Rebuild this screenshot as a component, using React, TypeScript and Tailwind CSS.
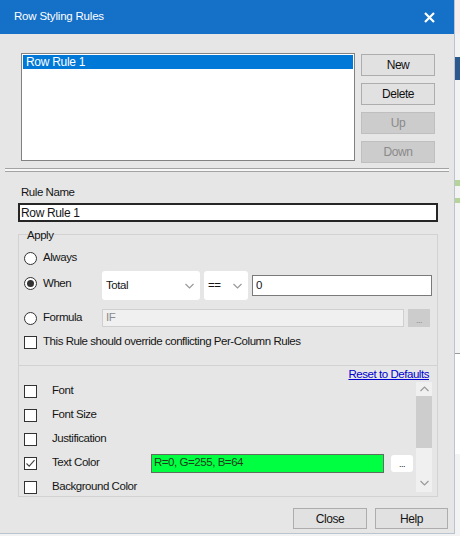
import { ReactNode } from 'react';

function Radio({ checked }: { checked?: boolean }) {
  return (
    <span className="flex h-[13px] w-[13px] shrink-0 items-center justify-center rounded-full border border-[#333] bg-white">
      {checked && <span className="h-[7px] w-[7px] rounded-full bg-[#333]" />}
    </span>
  );
}

function Check({ checked }: { checked?: boolean }) {
  return (
    <span className="flex h-[13px] w-[13px] shrink-0 items-center justify-center border border-[#333] bg-white">
      {checked && (
        <svg width="11" height="11" viewBox="0 0 11 11">
          <polyline points="1.5,5.5 4.2,8.2 9.5,2.2" fill="none" stroke="#444" strokeWidth="1.1" />
        </svg>
      )}
    </span>
  );
}

function Chevron({ up }: { up?: boolean }) {
  return (
    <svg width="9" height="6" viewBox="0 0 9 6">
      <polyline
        points={up ? '0.5,5 4.5,1 8.5,5' : '0.5,1 4.5,5 8.5,1'}
        fill="none"
        stroke="#9a9a9a"
        strokeWidth="1.2"
      />
    </svg>
  );
}

function Combo({ label, className }: { label: string; className: string }) {
  return (
    <div className={`flex h-[29px] items-center justify-between rounded-[3px] bg-white pl-[4px] pr-[6px] ${className}`}>
      <span>{label}</span>
      <Chevron />
    </div>
  );
}

function SideButton({ children, disabled }: { children: ReactNode; disabled?: boolean }) {
  return (
    <div
      className={`flex h-[22px] w-[74px] items-center justify-center border text-[12px] ${
        disabled ? 'border-[#bfbfbf] bg-[#cccccc] text-[#8a8a8a]' : 'border-[#adadad] bg-[#e1e1e1] text-[#111]'
      }`}
    >
      {children}
    </div>
  );
}

const items = ['Font', 'Font Size', 'Justification', 'Text Color', 'Background Color'];

export default function App() {
  return (
    <div className="flex h-[536px] w-[460px] bg-[#f3f3f3] font-['Liberation_Sans',Arial,sans-serif] text-[11.5px] tracking-[-0.45px] text-[#151515]">
      <div className="flex h-[534px] w-[455px] shrink-0 flex-col border-b border-r border-[#b9c4d0] bg-[#e6e6e6]">
        {/* title bar */}
        <div className="flex h-[34px] shrink-0 items-center justify-between bg-[#1570c8] pl-[14px] pr-[19px] text-white">
          <span className="text-[11.5px] tracking-[-0.2px]">Row Styling Rules</span>
          <svg width="11" height="11" viewBox="0 0 11 11">
            <path d="M1 1 L10 10 M10 1 L1 10" stroke="white" strokeWidth="2.2" />
          </svg>
        </div>

        {/* rules list */}
        <div className="flex pl-[21px] pt-[19px]">
          <div className="h-[108px] w-[334px] border border-[#828282] bg-white p-[1px]">
            <div className="flex h-[14px] items-center bg-[#0078d7] pl-[3px] text-[12px] tracking-[-0.3px] text-white">Row Rule 1</div>
          </div>
          <div className="ml-[6px] flex flex-col gap-[7px] pt-[1px]">
            <SideButton>New</SideButton>
            <SideButton>Delete</SideButton>
            <SideButton disabled>Up</SideButton>
            <SideButton disabled>Down</SideButton>
          </div>
        </div>

        {/* splitter */}
        <div className="mx-[5px] mt-[5px] h-[4px] border-y border-[#a3a3a3] bg-[#f7f7f7]" />

        {/* rule editor */}
        <div className="flex flex-col px-[18px]">
          <div className="mt-[14px] flex h-[14px] items-center pl-[3px]">Rule Name</div>
          <div className="mt-[3px] flex h-[19px] w-[420px] items-center border-2 border-[#262626] bg-white pl-[1px] text-[12px] tracking-[-0.35px]">
            Row Rule 1
          </div>

          <div className="mt-[12px] flex h-[263px] w-[420px] flex-col border border-[#d2d2d2]">
            <div className="-mt-[6px] flex h-[14px] items-center pl-[8px]">Apply</div>

            <div className="mt-[7px] flex h-[16px] items-center gap-[6px] pl-[5px]">
              <Radio />
              <span>Always</span>
            </div>

            <div className="mt-[5px] flex h-[29px] items-center pl-[5px]">
              <div className="-mt-[4px] flex w-[78px] items-center gap-[6px]">
                <Radio checked />
                <span>When</span>
              </div>
              <Combo label="Total" className="w-[98px]" />
              <Combo label="==" className="ml-[4px] w-[44px]" />
              <div className="ml-[4px] flex h-[21px] w-[180px] items-center border border-[#7a7a7a] bg-white pl-[3px]">0</div>
            </div>

            <div className="mt-[9px] flex h-[18px] items-center pl-[5px]">
              <div className="flex w-[78px] items-center gap-[6px]">
                <Radio />
                <span>Formula</span>
              </div>
              <div className="flex h-[18px] w-[302px] items-center border border-[#cfcfcf] bg-[#f0f0f0] pl-[3px] text-[#8c8c8c]">IF</div>
              <div className="ml-[4px] flex h-[18px] w-[22px] items-end justify-center bg-[#cccccc] pb-[2px] text-[9px] leading-none text-[#8c8c8c]">
                ...
              </div>
            </div>

            <div className="mt-[8px] flex h-[14px] items-center gap-[6px] pl-[5px]">
              <Check />
              <span>This Rule should override conflicting Per-Column Rules</span>
            </div>

            {/* style options */}
            <div className="mt-[16px] flex flex-1 flex-col overflow-hidden border-t border-[#d2d2d2]">
              <div className="flex h-[14px] justify-end pr-[8px] text-[#0000d0] underline">Reset to Defaults</div>
              <div className="flex flex-1 overflow-hidden">
                <div className="-mt-px flex flex-1 flex-col">
                  {items.map((label) => (
                    <div key={label} className="flex h-[24px] shrink-0 items-center pl-[5px]">
                      <Check checked={label === 'Text Color'} />
                      <span className={label === 'Text Color' ? 'ml-[15px] w-[99px]' : 'ml-[15px]'}>{label}</span>
                      {label === 'Text Color' && (
                        <>
                          <div className="flex h-[19px] w-[233px] items-center border border-[#5f6f5f] bg-[#00ff40] pl-[2px] text-[#1d3b1d]">
                            R=0, G=255, B=64
                          </div>
                          <div className="ml-[7px] flex h-[17px] w-[22px] items-end justify-center rounded-[3px] bg-white pb-[3px] text-[9px] leading-none">
                            ...
                          </div>
                        </>
                      )}
                    </div>
                  ))}
                </div>
                <div className="mr-[5px] mt-[2px] flex h-[110px] w-[16px] flex-col items-center bg-[#f0f0f0]">
                  <div className="flex h-[14px] items-center">
                    <Chevron up />
                  </div>
                  <div className="h-[52px] w-[16px] bg-[#cdcdcd]" />
                  <div className="flex-1" />
                  <div className="flex h-[18px] items-center">
                    <Chevron />
                  </div>
                </div>
              </div>
            </div>
          </div>
        </div>

        {/* bottom buttons */}
        <div className="mt-[11px] flex justify-end gap-[8px] pr-[6px] text-[12px]">
          <div className="flex h-[21px] w-[74px] items-center justify-center border border-[#adadad] bg-[#e1e1e1]">Close</div>
          <div className="flex h-[21px] w-[73px] items-center justify-center border border-[#adadad] bg-[#e1e1e1]">Help</div>
        </div>
      </div>

      {/* sliver of the window behind */}
      <div className="flex flex-1 flex-col">
        <div className="h-[34px] bg-[#f6eeee]" />
        <div className="mt-[23px] h-[23px] bg-[#2c5a8c]" />
        <div className="mt-[100px] h-[6px] bg-[#b6d39a]" />
        <div className="mt-[12px] h-[5px] bg-[#b6d39a]" />
        <div className="mt-[150px] h-[1px] bg-[#9a9a9a]" />
        <div className="h-[100px] bg-white" />
      </div>
    </div>
  );
}
